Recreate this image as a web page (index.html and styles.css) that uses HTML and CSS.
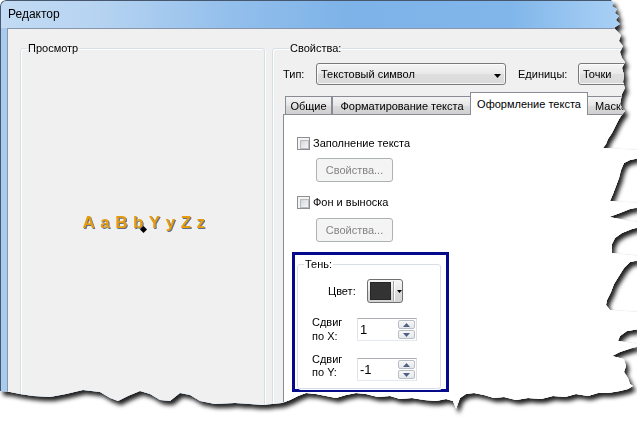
FILE: index.html
```html
<!DOCTYPE html>
<html lang="ru">
<head>
<meta charset="utf-8">
<title>Редактор</title>
<link rel="stylesheet" href="styles.css">
</head>
<body>
<div class="shot">
  <div class="window">
    <div class="titlebar"><span class="title">Редактор</span></div>
    <div class="frame">
      <div class="client">
        <fieldset class="group preview">
          <legend>Просмотр</legend>
          <div class="preview-area">
            <span class="sample">AaBbYyZz</span>
            <svg class="anchor" width="7" height="7" viewBox="0 0 7 7"><path d="M3.5 0L7 3.5 3.5 7 0 3.5z" fill="#000"/></svg>
          </div>
        </fieldset>
        <fieldset class="group props">
          <legend>Свойства:</legend>
          <div class="type-row">
            <span class="type-lbl">Тип:</span>
            <div class="combo combo-type">
              <span>Текстовый символ</span>
              <svg class="arrow" width="7" height="4" viewBox="0 0 7 4"><path d="M0 0h7L3.5 4z" fill="#000"/></svg>
            </div>
            <span class="units-lbl">Единицы:</span>
            <div class="combo combo-units"><span>Точки</span></div>
          </div>
          <div class="tabctl">
            <div class="tabs">
              <div class="tab tab-general">Общие</div>
              <div class="tab tab-format">Форматирование текста</div>
              <div class="tab tab-active">Оформление текста</div>
              <div class="tab tab-mask">Маска</div>
            </div>
            <div class="panel">
              <div class="check"><span class="cb"></span><span>Заполнение текста</span></div>
              <button class="btn btn-first" disabled>Свойства...</button>
              <div class="check check-second"><span class="cb"></span><span>Фон и выноска</span></div>
              <button class="btn btn-second" disabled>Свойства...</button>
              <div class="highlight">
                <fieldset class="group shadow-group">
                  <legend>Тень:</legend>
                  <div class="color-row">
                    <span class="color-lbl">Цвет:</span>
                    <div class="colorbtn">
                      <span class="swatch"></span>
                      <span class="split"></span>
                      <svg class="carrow" width="5" height="3" viewBox="0 0 5 3"><path d="M0 0h5L2.5 3z" fill="#000"/></svg>
                    </div>
                  </div>
                  <div class="spin-row row-x">
                    <span class="spin-lbl">Сдвиг<br>по X:</span>
                    <div class="spin">
                      <span class="val">1</span>
                      <span class="spinbtns">
                        <span class="sbtn"><svg width="7" height="4" viewBox="0 0 7 4"><path d="M3.5 0L7 4H0z" fill="#4d6185"/></svg></span>
                        <span class="sbtn"><svg width="7" height="4" viewBox="0 0 7 4"><path d="M0 0h7L3.5 4z" fill="#4d6185"/></svg></span>
                      </span>
                    </div>
                  </div>
                  <div class="spin-row row-y">
                    <span class="spin-lbl">Сдвиг<br>по Y:</span>
                    <div class="spin">
                      <span class="val">-1</span>
                      <span class="spinbtns">
                        <span class="sbtn"><svg width="7" height="4" viewBox="0 0 7 4"><path d="M3.5 0L7 4H0z" fill="#4d6185"/></svg></span>
                        <span class="sbtn"><svg width="7" height="4" viewBox="0 0 7 4"><path d="M0 0h7L3.5 4z" fill="#4d6185"/></svg></span>
                      </span>
                    </div>
                  </div>
                </fieldset>
              </div>
            </div>
          </div>
        </fieldset>
      </div>
    </div>
  </div>
</div>
</body>
</html>
```

FILE: styles.css
```css
* { box-sizing: border-box; }

html, body {
  margin: 0;
  padding: 0;
  background: #fff;
}

body {
  width: 637px;
  height: 422px;
  overflow: hidden;
  font-family: "Liberation Sans", Arial, sans-serif;
  font-size: 11px;
  line-height: 13px;
  color: #000;
}

.shot {
  width: 637px;
  height: 422px;
  filter: drop-shadow(3px 4px 2px rgba(0, 0, 0, 0.88));
}

.window {
  width: 637px;
  height: 422px;
  display: flex;
  flex-direction: column;
  overflow: hidden;
  border-top-left-radius: 6px;
  background: #f0f0f0;
  clip-path: polygon(0px 0px, 611px 0px, 614px 3px, 612px 6px, 617px 9px, 615px 13px, 619px 16px, 616px 20px, 620px 24px, 614px 28px, 617px 31px, 621px 35px, 619px 41px, 623px 46px, 620px 52px, 622px 58px, 625px 62px, 622px 68px, 624px 75px, 623px 82px, 625px 88px, 622px 94px, 621px 99px, 620px 104px, 622px 108px, 625px 111px, 621px 116px, 618px 121px, 615px 127px, 612px 133px, 608px 139px, 606px 144px, 603px 148px, 640px 150px, 640px 158px, 630px 160px, 624px 163px, 621px 170px, 619px 178px, 616px 186px, 613px 194px, 610px 201px, 640px 203px, 640px 207px, 630px 209px, 620px 213px, 609px 217px, 620px 219px, 630px 221px, 640px 222px, 640px 227px, 632px 229px, 622px 233px, 615px 238px, 612px 244px, 612px 253px, 640px 256px, 640px 260px, 630px 262px, 624px 268px, 619px 276px, 614px 284px, 611px 292px, 607px 300px, 606px 305px, 610px 310px, 640px 312px, 640px 329px, 627px 331px, 620px 336px, 618px 341px, 640px 344px, 640px 346px, 632px 348px, 620px 352px, 612px 356px, 624px 359px, 626px 366px, 624px 372px, 628px 378px, 630px 384px, 633px 386px, 628px 389px, 620px 391px, 608px 393px, 598px 393px, 588px 396px, 576px 394px, 565px 397px, 553px 396px, 541px 399px, 528px 398px, 516px 400px, 504px 397px, 494px 398px, 484px 395px, 474px 393px, 466px 394px, 460px 398px, 456px 409px, 453px 401px, 446px 399px, 436px 401px, 424px 400px, 412px 398px, 400px 399px, 390px 396px, 378px 397px, 366px 394px, 356px 393px, 346px 395px, 336px 398px, 326px 396px, 316px 394px, 306px 393px, 298px 396px, 290px 400px, 282px 403px, 272px 404px, 262px 405px, 250px 404px, 235px 403px, 215px 404px, 200px 401px, 190px 395px, 180px 393px, 170px 401px, 160px 400px, 150px 394px, 140px 391px, 128px 396px, 118px 401px, 110px 398px, 100px 392px, 83px 390px, 66px 394px, 50px 397px, 33px 396px, 20px 394px, 10px 392px, 0px 391px);
}

/* ---------- title bar ---------- */
.titlebar {
  flex: none;
  height: 28px;
  display: flex;
  align-items: center;
  padding-left: 7px;
  border-top: 1px solid #47586e;
  border-left: 1px solid #47586e;
  border-top-left-radius: 6px;
  background: linear-gradient(to right, #c3dbf4 0, #b5d3f1 16%, #93bfec 36%, #7db3e8 55%, #80b6ea 80%, #a9d0f5 97%);
  font-size: 12px;
  line-height: 15px;
}

.frame {
  flex: 1;
  display: flex;
  border-left: 1px solid #47586e;
  padding-left: 6px;
  background: linear-gradient(to right, #a8cbef, #8fbbea 55%, #bdd8f3);
}

.client {
  flex: 1;
  display: flex;
  align-items: flex-start;
  gap: 7px;
  padding: 13px 0 0 12px;
  background: #f0f0f0;
  border-top: 1px solid #8796ab;
  border-left: 1px solid #8796ab;
}

/* ---------- group boxes ---------- */
.group {
  flex: none;
  margin: 0;
  padding: 0;
  min-width: 0;
  border: 1px solid #d5dfe5;
  border-radius: 3px;
  box-shadow: inset 1px 1px 0 #fff, 1px 1px 0 #fff;
}

.group > legend {
  margin-left: 6px;
  padding: 0 1px;
  line-height: 13px;
}

.preview {
  width: 245px;
  height: 400px;
}

.preview-area {
  position: relative;
  padding: 158px 0 0 8px;
  text-align: center;
}

.sample {
  font-size: 17px;
  line-height: 20px;
  font-weight: bold;
  letter-spacing: 5.5px;
  color: #e69c0c;
  text-shadow: 1px 1px 0 rgba(45, 65, 115, 0.75);
}

.anchor {
  position: absolute;
  left: 119px;
  top: 171px;
}

.props {
  width: 520px;
  height: 400px;
  padding: 8px 0 0 10px;
}

/* ---------- type row ---------- */
.type-row {
  display: flex;
  align-items: center;
  height: 22px;
}

.type-lbl { width: 33px; }

.combo {
  display: flex;
  align-items: center;
  justify-content: space-between;
  height: 22px;
  padding: 0 4px;
  border: 1px solid #7a7a7a;
  border-radius: 3px;
  background: linear-gradient(#f5f5f5, #e9e9e9 50%, #dfdfdf 51%, #d9d9d9);
  box-shadow: inset 0 0 0 1px rgba(255, 255, 255, 0.75);
}

.combo-type { width: 190px; }
.combo-type .arrow { margin-top: 3px; }

.units-lbl {
  margin-left: 12px;
  width: 60px;
}

.combo-units { width: 80px; }

/* ---------- tabs ---------- */
.tabctl {
  margin-top: 7px;
}

.tabs {
  display: flex;
  align-items: flex-end;
  height: 22px;
  padding-left: 2px;
}

.tab {
  flex: none;
  height: 18px;
  padding-top: 3px;
  text-align: center;
  white-space: nowrap;
  border: 1px solid #898c95;
  border-bottom: 0;
  background: linear-gradient(#f4f4f4, #e6e6e6 50%, #dcdcdc 51%, #cfcfcf);
}

.tab-general { width: 47px; }
.tab-format { width: 140px; }
.tab-mask { width: 60px; text-align: left; padding-left: 8px; }

.tab-active {
  position: relative;
  z-index: 2;
  width: 118px;
  height: 23px;
  padding-top: 5px;
  margin: 0 -2px -1px;
  background: #fff;
}

.panel {
  height: 300px;
  border: 1px solid #898c95;
  background: #fff;
  padding: 22px 0 0 8px;
}

/* ---------- check boxes & buttons ---------- */
.check {
  display: flex;
  align-items: center;
  gap: 3px;
  height: 13px;
  margin-left: 5px;
}

.check-second { margin-top: 14px; }

.cb {
  flex: none;
  width: 13px;
  height: 13px;
  padding: 2px;
  border: 1px solid #8f8f8f;
  background: #f4f4f4;
}

.cb::after {
  content: "";
  display: block;
  width: 100%;
  height: 100%;
  border: 1px solid #b8bcc2;
  background: linear-gradient(135deg, #d3d6da, #f7f7f7);
}

.btn {
  display: block;
  width: 77px;
  height: 24px;
  margin-left: 24px;
  padding: 0;
  border: 1px solid #adb2b5;
  border-radius: 3px;
  background: #f4f4f4;
  color: #838383;
  font: inherit;
}

.btn-first { margin-top: 8px; }
.btn-second { margin-top: 9px; }

/* ---------- highlighted shadow group ---------- */
.highlight {
  width: 157px;
  height: 140px;
  margin-top: 10px;
  padding: 3px 0 0 2px;
  border: 3px solid #050a8c;
}

.shadow-group {
  width: 144px;
  height: 131px;
}

.color-row {
  display: flex;
  align-items: center;
  margin-top: 8px;
  padding-left: 30px;
}

.color-lbl { width: 39px; }

.colorbtn {
  display: flex;
  align-items: center;
  width: 36px;
  height: 24px;
  padding-left: 2px;
  border: 1px solid #707070;
  border-radius: 3px;
  background: linear-gradient(#f6f6f6, #e8e8e8 50%, #dcdcdc 51%, #d3d3d3);
}

.swatch {
  width: 21px;
  height: 18px;
  background: #333;
  border: 1px solid #262626;
}

.split {
  width: 2px;
  height: 20px;
  margin-left: 2px;
  border-left: 1px solid #a3a3a3;
  border-right: 1px solid #fff;
}

.carrow { margin-left: 2px; }

.spin-row {
  display: flex;
  align-items: flex-start;
  height: 23px;
  padding-left: 14px;
}

.row-x { margin-top: 15px; }
.row-y { margin-top: 17px; }

.spin-lbl {
  width: 45px;
  height: 23px;
  line-height: 14px;
}

.row-x .spin-lbl { margin-top: -3px; }
.row-y .spin-lbl { margin-top: -5px; line-height: 13px; }

.spin {
  display: flex;
  width: 60px;
  height: 23px;
  border: 1px solid;
  border-color: #abadb3 #dbdfe6 #e3e9ef #e2e3ea;
  background: #fff;
}

.val {
  flex: 1;
  padding: 3px 0 0 2px;
  font-size: 13px;
  line-height: 15px;
}

.spinbtns {
  display: flex;
  flex-direction: column;
  gap: 1px;
  width: 18px;
  padding: 1px 1px 1px 0;
}

.sbtn {
  flex: 1;
  display: flex;
  align-items: center;
  justify-content: center;
  border: 1px solid #b9bec6;
  border-radius: 2px;
  background: linear-gradient(#f7f7f7, #e4e7eb);
}
```
